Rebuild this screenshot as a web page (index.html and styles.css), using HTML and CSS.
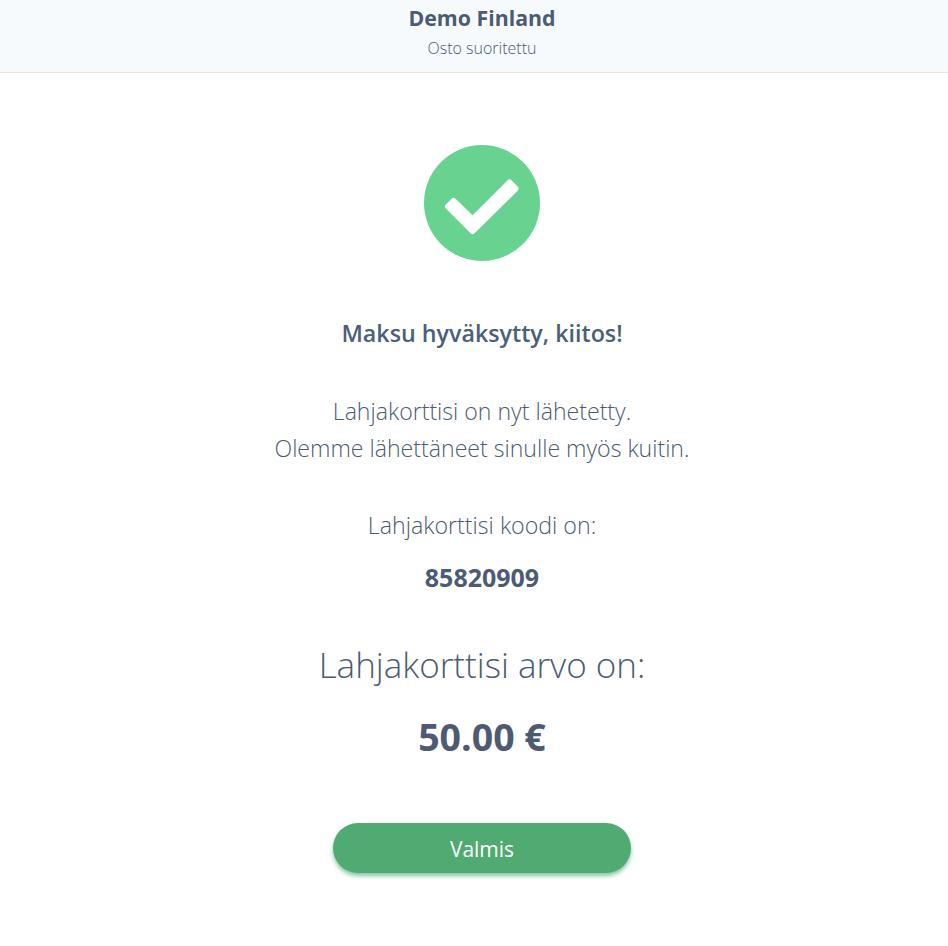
FILE: index.html
```html
<!DOCTYPE html>
<html lang="fi">
  <head>
    <meta charset="UTF-8" />
    <meta name="viewport" content="width=device-width, initial-scale=1.0" />
    <title>Demo Finland</title>
    <link rel="stylesheet" href="styles.css">
  </head>
  <body>
    <header class="top-bar">
      <div class="shop-name">Demo Finland</div>
      <div class="shop-status">Osto suoritettu</div>
    </header>

    <main class="receipt">
      <svg class="check-icon" width="116" height="116" viewBox="0 0 116 116" aria-hidden="true">
        <circle cx="58" cy="58" r="58" fill="#68d391" />
        <polygon points="29.5,56 24,61.5 48.5,86 91.5,43.5 85.5,37.5 48.5,74.5" fill="#fff" stroke="#fff" stroke-width="6" stroke-linejoin="round" />
      </svg>

      <h2 class="title">Maksu hyväksytty, kiitos!</h2>

      <p class="message">
        Lahjakorttisi on nyt lähetetty.<br />
        Olemme lähettäneet sinulle myös kuitin.
      </p>

      <p class="code-label">Lahjakorttisi koodi on:</p>
      <div class="code">85820909</div>

      <p class="value-label">Lahjakorttisi arvo on:</p>
      <div class="value">50.00 €</div>

      <button class="done-button" type="button">Valmis</button>
    </main>
  </body>
</html>
```

FILE: styles.css
```css
html,
body {
  overflow: hidden;
}

body {
  margin: 0;
  height: 946px;
  font-family: "Open Sans", "Noto Sans", sans-serif;
  color: #4c5b73;
  background: #fff;
}

.top-bar {
  box-sizing: border-box;
  height: 73px;
  padding: 4px 0 0 16px;
  text-align: center;
  background-color: #f7fafc;
  border-bottom: 1px solid #e2e8f0;
}

.shop-name {
  font-size: 21.3px;
  font-weight: 700;
  line-height: 27px;
}

.shop-status {
  margin-top: 5px;
  font-size: 16px;
  font-weight: 300;
  line-height: 24px;
}

.receipt {
  display: flex;
  flex-direction: column;
  align-items: center;
  padding: 72px 0 0 16px;
  text-align: center;
}

.check-icon {
  display: block;
}

.title {
  margin: 56px 0 0;
  font-size: 23.25px;
  font-weight: 600;
  line-height: 32px;
  color: #4a6079;
}

.message {
  margin: 44px 0 0;
  font-size: 23.1px;
  font-weight: 300;
  line-height: 37px;
}

.code-label {
  margin: 42px 0 0;
  font-size: 23.2px;
  font-weight: 300;
  line-height: 32px;
}

.code {
  margin-top: 20px;
  font-size: 25px;
  font-weight: 700;
  line-height: 32px;
}

.value-label {
  margin: 48px 0 0;
  font-size: 35px;
  font-weight: 300;
  line-height: 48px;
}

.value {
  margin-top: 24px;
  font-size: 37.5px;
  font-weight: 700;
  line-height: 48px;
}

.done-button {
  width: 298px;
  height: 50px;
  margin-top: 62px;
  padding: 2px 0 0;
  font-family: inherit;
  font-size: 21px;
  color: #fff;
  background-color: #4fab72;
  border: none;
  border-radius: 25px;
  box-shadow: 0 3px 4px rgba(56, 161, 105, 0.6);
  cursor: pointer;
}
```
